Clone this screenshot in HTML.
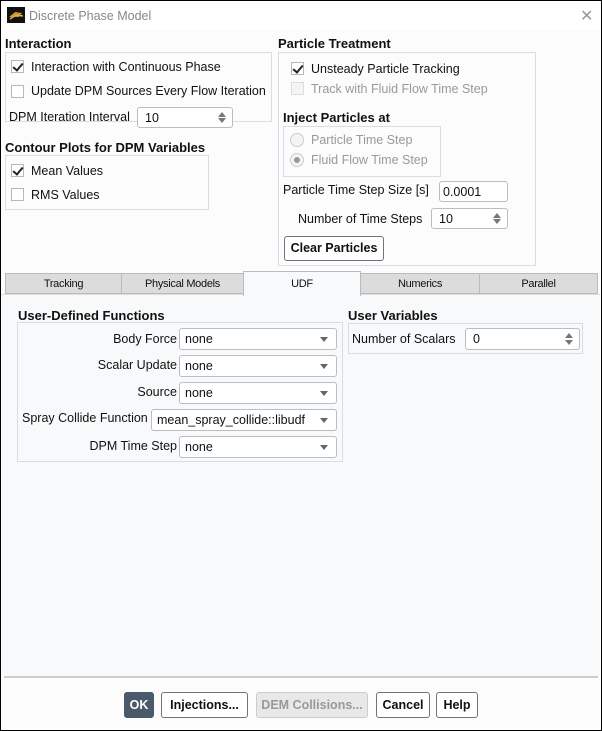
<!DOCTYPE html>
<html><head><meta charset="utf-8"><style>
*{box-sizing:border-box;margin:0;padding:0}
body{width:602px;height:731px;overflow:hidden;background:#fff;font-family:"Liberation Sans",sans-serif;font-size:12.5px;color:#111;position:relative}
.a{position:absolute;white-space:nowrap}
.win{position:absolute;left:0;top:0;width:602px;height:731px;border:1px solid #000;background:#fcfcfc}
.title{position:absolute;left:1px;top:1px;width:600px;height:29px;background:#fff}
.h{font-weight:bold;font-size:13px}
.box{position:absolute;border:1px solid #d7dde5}
.cb{position:absolute;width:13px;height:13px;border:1px solid #b8b8b8;background:#fff}
.cb.on::after{content:"";position:absolute;left:3px;top:0px;width:4px;height:8px;border:solid #222;border-width:0 2px 2px 0;transform:rotate(40deg)}
.cb.dis{border-color:#ddd;background:#f4f4f4}
.rd{position:absolute;width:14px;height:14px;border:1px solid #ccc;border-radius:50%;background:#f4f4f4}
.rd.on::after{content:"";position:absolute;left:3px;top:3px;width:6px;height:6px;border-radius:50%;background:#999}
.inp{position:absolute;border:1px solid #b8bec6;border-radius:3px;background:#fff;padding-left:7px;line-height:20px;white-space:nowrap}
.spin::before,.spin::after{content:"";position:absolute;right:6px;border-left:4px solid transparent;border-right:4px solid transparent}
.spin::before{top:4px;border-bottom:5px solid #777}
.spin::after{bottom:4px;border-top:5px solid #777}
.cmb::after{content:"";position:absolute;right:8px;top:8px;border-left:4px solid transparent;border-right:4px solid transparent;border-top:5px solid #666}
.tab{position:absolute;top:273px;height:21px;border:1px solid #bbb;background:#dcdcdc;font-size:11px;text-align:center;line-height:21px;letter-spacing:-0.3px}
.btn{position:absolute;top:692px;height:26px;border:1px solid #6b7580;border-radius:3px;background:#fff;font-weight:bold;text-align:center;line-height:24px;font-size:12.5px;white-space:nowrap}
.gray{color:#999}
</style></head><body>
<div class="win"></div>
<div class="title"></div>
<svg class="a" style="left:7px;top:7px" width="18" height="16"><rect width="18" height="16" fill="#111"/><path d="M2 10 L8 5 L15 6 L12 10 Z" fill="#c8962a"/><path d="M3 12 L9 8 L16 9" stroke="#e0b050" stroke-width="1.5" fill="none"/></svg>
<div class="a" style="left:29px;top:9px;color:#888;font-size:12.5px">Discrete Phase Model</div>
<div class="a" style="left:580px;top:6px;color:#999;font-size:16px">✕</div>

<div class="a h" style="left:5px;top:36px">Interaction</div>
<div class="box" style="left:5px;top:52px;width:267px;height:70px"></div>
<div class="cb on" style="left:11px;top:60px"></div><div class="a" style="left:31px;top:60px">Interaction with Continuous Phase</div>
<div class="cb" style="left:11px;top:85px"></div><div class="a" style="left:31px;top:84px">Update DPM Sources Every Flow Iteration</div>
<div class="a" style="left:9px;top:110px">DPM Iteration Interval</div>
<div class="inp spin" style="left:137px;top:107px;width:96px;height:21px">10</div>

<div class="a h" style="left:5px;top:140px">Contour Plots for DPM Variables</div>
<div class="box" style="left:5px;top:155px;width:204px;height:55px"></div>
<div class="cb on" style="left:11px;top:164px"></div><div class="a" style="left:31px;top:164px">Mean Values</div>
<div class="cb" style="left:11px;top:188px"></div><div class="a" style="left:31px;top:188px">RMS Values</div>

<div class="a h" style="left:278px;top:36px">Particle Treatment</div>
<div class="box" style="left:278px;top:52px;width:258px;height:214px"></div>
<div class="cb on" style="left:291px;top:62px"></div><div class="a" style="left:311px;top:62px">Unsteady Particle Tracking</div>
<div class="cb dis" style="left:291px;top:82px"></div><div class="a gray" style="left:311px;top:82px">Track with Fluid Flow Time Step</div>
<div class="a h" style="left:283px;top:110px">Inject Particles at</div>
<div class="box" style="left:283px;top:126px;width:158px;height:51px"></div>
<div class="rd" style="left:290px;top:133px"></div><div class="a gray" style="left:311px;top:133px">Particle Time Step</div>
<div class="rd on" style="left:290px;top:153px"></div><div class="a gray" style="left:311px;top:153px">Fluid Flow Time Step</div>
<div class="a" style="left:283px;top:183px">Particle Time Step Size [s]</div>
<div class="inp" style="left:439px;top:181px;width:69px;height:21px;padding-left:3px">0.0001</div>
<div class="a" style="left:298px;top:212px">Number of Time Steps</div>
<div class="inp spin" style="left:431px;top:208px;width:77px;height:21px">10</div>
<div class="a" style="left:284px;top:236px;width:100px;height:25px;border:1px solid #6b7580;border-radius:3px;background:#fff;font-weight:bold;text-align:center;line-height:23px">Clear Particles</div>

<div class="a" style="left:1px;top:294px;width:599px;height:382px;background:#f8f9fa;border-top:1px solid #ddd"></div>
<div class="tab" style="left:5px;width:117px">Tracking</div>
<div class="tab" style="left:121px;width:123px">Physical Models</div>
<div class="tab" style="left:243px;top:271px;height:25px;width:118px;background:#f8f9fa;border-bottom:none;line-height:24px">UDF</div>
<div class="tab" style="left:360px;width:120px">Numerics</div>
<div class="tab" style="left:479px;width:119px">Parallel</div>

<div class="a h" style="left:18px;top:308px">User-Defined Functions</div>
<div class="box" style="left:17px;top:322px;width:326px;height:140px"></div>
<div class="a" style="left:20px;top:332px;width:157px;text-align:right">Body Force</div>
<div class="inp cmb" style="left:179px;top:328px;width:158px;height:22px;padding-left:5px">none</div>
<div class="a" style="left:20px;top:358px;width:157px;text-align:right">Scalar Update</div>
<div class="inp cmb" style="left:179px;top:355px;width:158px;height:22px;padding-left:5px">none</div>
<div class="a" style="left:20px;top:385px;width:157px;text-align:right">Source</div>
<div class="inp cmb" style="left:179px;top:382px;width:158px;height:22px;padding-left:5px">none</div>
<div class="a" style="left:22px;top:411px">Spray Collide Function</div>
<div class="inp cmb" style="left:151px;top:409px;width:186px;height:22px;padding-left:5px">mean_spray_collide::libudf</div>
<div class="a" style="left:20px;top:439px;width:157px;text-align:right">DPM Time Step</div>
<div class="inp cmb" style="left:179px;top:436px;width:158px;height:22px;padding-left:5px">none</div>

<div class="a h" style="left:348px;top:308px">User Variables</div>
<div class="box" style="left:348px;top:323px;width:235px;height:31px"></div>
<div class="a" style="left:352px;top:332px">Number of Scalars</div>
<div class="inp spin" style="left:465px;top:328px;width:115px;height:22px">0</div>

<div class="a" style="left:4px;top:676px;width:594px;height:2px;background:#ccc"></div>
<div class="btn" style="left:124px;width:30px;background:#4b5a6a;border-color:#4b5a6a;color:#fff">OK</div>
<div class="btn" style="left:161px;width:87px">Injections...</div>
<div class="btn" style="left:256px;width:112px;background:#e8e8e8;border-color:#ccc;color:#999">DEM Collisions...</div>
<div class="btn" style="left:376px;width:54px">Cancel</div>
<div class="btn" style="left:436px;width:42px">Help</div>
</body></html>
